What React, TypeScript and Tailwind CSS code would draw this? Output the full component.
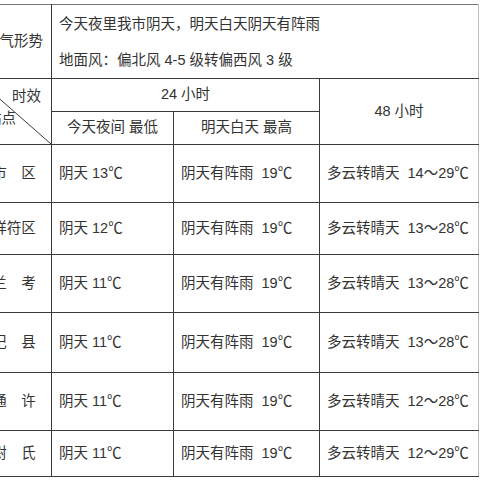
import React from "react"

// Kaifeng short-term forecast table (cropped on the left like the source)

const rows = [
  { name: "市　区", h: "h-[58px]", night: "阴天 13℃", day: "阴天有阵雨  19℃", next: "多云转晴天  14～29℃" },
  { name: "祥符区", h: "h-[52px]", night: "阴天 12℃", day: "阴天有阵雨  19℃", next: "多云转晴天  13～28℃" },
  { name: "兰　考", h: "h-[58px]", night: "阴天 11℃", day: "阴天有阵雨  19℃", next: "多云转晴天  13～28℃" },
  { name: "杞　县", h: "h-[60px]", night: "阴天 11℃", day: "阴天有阵雨  19℃", next: "多云转晴天  13～28℃" },
  { name: "通　许", h: "h-[58px]", night: "阴天 11℃", day: "阴天有阵雨  19℃", next: "多云转晴天  12～28℃" },
  { name: "尉　氏", h: "h-[46px]", night: "阴天 11℃", day: "阴天有阵雨  19℃", next: "多云转晴天  12～29℃" },
]

const cell = "border border-[#3a3a3a] p-0"

export default function App() {
  return (
    <div className="w-[480px] h-[480px] overflow-hidden bg-white pt-[4px] font-['Liberation_Sans','Noto_Sans_CJK_SC',sans-serif] text-[14.5px] text-[#333]">
      <table className="ml-[-24px] w-[502px] table-fixed border-collapse">
        <colgroup>
          <col className="w-[75px]" />
          <col className="w-[122px]" />
          <col className="w-[146px]" />
          <col className="w-[159px]" />
        </colgroup>
        <tbody>
          <tr className="h-[74px]">
            <td className={`${cell} border-t-[#777] text-center`}>天气形势</td>
            <td colSpan={3} className={`${cell} border-t-[#777] border-r-[#bbb]`}>
              <div className="flex flex-col gap-4 px-[7px] py-[7px] leading-[20px] whitespace-pre">
                <p>今天夜里我市阴天，明天白天阴天有阵雨</p>
                <p>地面风：偏北风 4-5 级转偏西风 3 级</p>
              </div>
            </td>
          </tr>
          <tr className="h-[33px]">
            <td rowSpan={2} className={`${cell} relative`}>
              <svg className="absolute inset-0 w-full h-full" preserveAspectRatio="none" viewBox="0 0 100 100">
                <line x1="0" y1="0" x2="100" y2="100" stroke="#3a3a3a" strokeWidth="1" vectorEffect="non-scaling-stroke" />
              </svg>
              <div className="relative flex h-full flex-col justify-between pb-[9px] pt-[2px]">
                <span className="self-end pr-[10px]">时效</span>
                <span className="self-start pl-[10px]">站点</span>
              </div>
            </td>
            <td colSpan={2} className={`${cell} text-center`}>24 小时</td>
            <td rowSpan={2} className={`${cell} border-r-[#bbb] text-center`}>48 小时</td>
          </tr>
          <tr className="h-[33px]">
            <td className={`${cell} text-center`}>今天夜间 最低</td>
            <td className={`${cell} text-center`}>明天白天 最高</td>
          </tr>
          {rows.map((r) => (
            <tr key={r.name} className={r.h}>
              <td className={`${cell} text-center`}>{r.name}</td>
              <td className={`${cell} pl-[7px] whitespace-pre`}>{r.night}</td>
              <td className={`${cell} pl-[7px] whitespace-pre`}>{r.day}</td>
              <td className={`${cell} border-r-[#bbb] pl-[7px] whitespace-pre`}>{r.next}</td>
            </tr>
          ))}
        </tbody>
      </table>
    </div>
  )
}
